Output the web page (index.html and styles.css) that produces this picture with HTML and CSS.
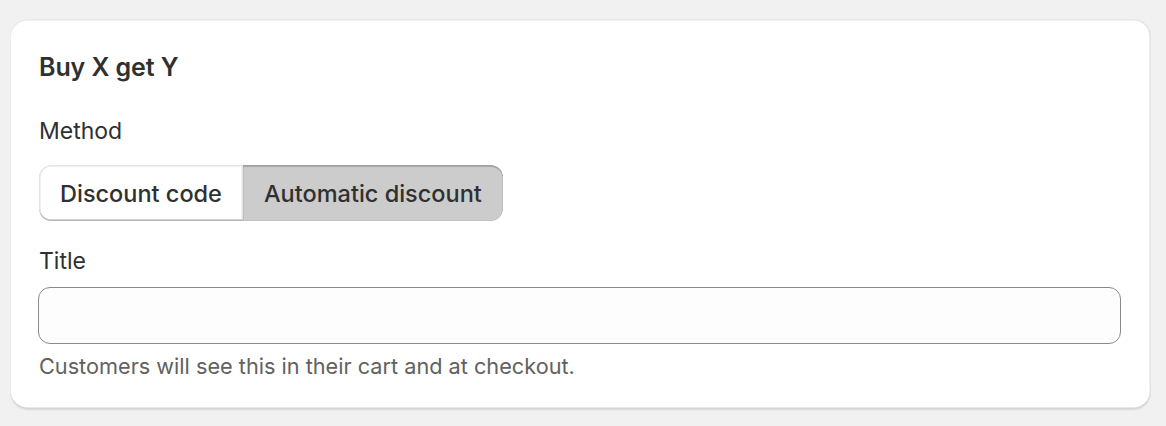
FILE: index.html
```html
<!DOCTYPE html>
<html lang="en">
<head>
<meta charset="utf-8">
<title>Buy X get Y</title>
<link rel="stylesheet" href="styles.css">
</head>
<body>
<main class="page">
  <section class="card">
    <h2 class="card-title">Buy X get Y</h2>
    <div class="field method-field">
      <div class="label">Method</div>
      <div class="segmented">
        <button class="seg-btn" type="button">Discount code</button>
        <button class="seg-btn is-selected" type="button">Automatic discount</button>
      </div>
    </div>
    <div class="field title-field">
      <label class="label" for="title">Title</label>
      <input class="text-input" id="title" type="text">
      <div class="help">Customers will see this in their cart and at checkout.</div>
    </div>
  </section>
</main>
</body>
</html>
```
FILE: styles.css
```css
* { box-sizing: border-box; }
html, body { margin: 0; padding: 0; }
body {
  background: #f1f1f1;
  font-family: Inter, "Noto Sans", sans-serif;
  color: #303030;
  width: 1166px;
  height: 426px;
  overflow: hidden;
}
.page {
  padding: 19px 15px 0 10px;
}
.card {
  background: #ffffff;
  border-radius: 18px;
  padding: 33px 30px 28px 29px;
  box-shadow: 0 1.5px 0 0 rgba(26,26,26,0.08), inset 0 -1.5px 0 0 #d4d4d4, inset 1px 0 0 0 #ececec, inset -1.5px 0 0 0 #e3e3e3, inset 0 1.5px 0 0 #e8e8e8;
}
.card-title {
  margin: 0;
  font-size: 25px;
  line-height: 30px;
  font-weight: 600;
  letter-spacing: -0.1px;
}
.label {
  display: block;
  font-size: 23px;
  line-height: 30px;
  font-weight: 400;
}
.method-field { margin-top: 34px; }
.segmented {
  display: inline-flex;
  margin-top: 19px;
  border-radius: 12px;
  overflow: hidden;
}
.seg-btn {
  font-family: inherit;
  font-size: 23.5px;
  font-weight: 550;
  color: #303030;
  height: 56px;
  padding: 0 21px;
  border: 0;
  margin: 0;
  background: #ffffff;
  cursor: pointer;
  box-shadow: inset 0 -1.5px 0 0 #b5b5b5, inset 0 0 0 1.5px #e3e3e3;
  border-radius: 12px 0 0 12px;
}
.seg-btn.is-selected {
  background: #cccccc;
  border-radius: 0 12px 12px 0;
  box-shadow: inset 0 2px 1px 0 rgba(26,26,26,0.2), inset 0 0 0 1px #c2c2c2;
}
.title-field { margin-top: 25px; }
.text-input {
  display: block;
  height: 57px;
  margin-top: 10.5px;
  margin-left: -1px;
  width: calc(100% + 1px);
  border: 1.5px solid #8a8a8a;
  border-radius: 12px;
  background: #fdfdfd;
  font-family: inherit;
  font-size: 23px;
  padding: 0 18px;
  outline: none;
}
.help {
  margin-top: 7px;
  font-size: 21.7px;
  line-height: 30px;
  color: #616161;
}
```
